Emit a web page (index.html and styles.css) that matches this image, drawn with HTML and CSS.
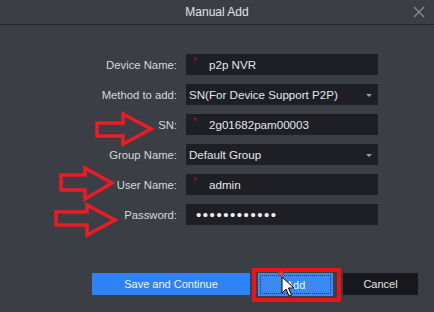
FILE: index.html
```html
<!DOCTYPE html>
<html>
<head>
<meta charset="utf-8">
<link rel="stylesheet" href="styles.css">
</head>
<body>
<div class="dialog">
  <div class="titlebar">
    <span class="title">Manual Add</span>
    <svg class="close" width="12" height="12" viewBox="0 0 12 12"><path d="M1 1L11 11M11 1L1 11" stroke="#8a8d94" stroke-width="1.3"/></svg>
  </div>
  <div class="form">
    <label class="lbl">Device Name:</label>
    <div class="field"><span class="req">*</span><span class="val">p2p NVR</span></div>
    <label class="lbl">Method to add:</label>
    <div class="field select"><span class="val plain">SN(For Device Support P2P)</span><span class="caret"></span></div>
    <label class="lbl">SN:</label>
    <div class="field"><span class="req">*</span><span class="val">2g01682pam00003</span></div>
    <label class="lbl">Group Name:</label>
    <div class="field select"><span class="val plain">Default Group</span><span class="caret"></span></div>
    <label class="lbl">User Name:</label>
    <div class="field"><span class="req">*</span><span class="val">admin</span></div>
    <label class="lbl">Password:</label>
    <div class="field"><span class="dots">••••••••••••</span></div>
  </div>
  <div class="buttons">
    <button class="btn primary wide">Save and Continue</button>
    <div class="addwrap">
      <button class="btn primary add">Add</button>
      <span class="redbox"></span>
    </div>
    <button class="btn dark">Cancel</button>
  </div>
  <svg class="arrows" width="434" height="312" viewBox="0 0 434 312">
    <g fill="none" stroke="#ec1c24" stroke-width="3.5" stroke-linejoin="miter">
      <polygon points="97,123 123,123 123,114 151,129 123,144 123,136 97,136"/>
      <polygon points="61,175 85,175 85,168 112,183 85,199 85,190 61,190"/>
      <polygon points="56,212 87,212 87,205 115,220 87,235 87,225 56,225"/>
    </g>
    <circle cx="281" cy="274" r="2.2" fill="none" stroke="#e0303a" stroke-width="1.3"/>
    <path d="M282 277 L282 293 L286 289 L289 296 L291.5 295 L288.5 288 L294 288 Z" fill="#fff" stroke="#000" stroke-width="1"/>
  </svg>
</div>
</body>
</html>
```
FILE: styles.css
```css
html, body {
  margin: 0;
  padding: 0;
  background: #3b3e45;
}
.dialog {
  position: relative;
  width: 434px;
  height: 312px;
  background: #3b3e45;
  font-family: "Liberation Sans", Arial, sans-serif;
  font-size: 11.3px;
  color: #d4d4d6;
  overflow: hidden;
}
.titlebar {
  height: 24px;
  border-bottom: 1px solid #23252a;
  display: flex;
  align-items: center;
  justify-content: center;
  position: relative;
}
.title {
  font-size: 12px;
  color: #e2e3e5;
}
.close {
  position: absolute;
  right: 9px;
  top: 6px;
}
.form {
  display: grid;
  grid-template-columns: 177px 192px;
  column-gap: 9px;
  row-gap: 9px;
  padding-top: 29px;
  grid-auto-rows: 21px;
}
.lbl {
  text-align: right;
  align-self: center;
  color: #d6d7da;
}
.field {
  background: #1d1f25;
  display: flex;
  align-items: center;
  position: relative;
  color: #e6e7e9;
  font-size: 11.6px;
}
.req {
  color: #b0102a;
  font-size: 10px;
  width: 23px;
  padding-left: 7px;
  box-sizing: border-box;
  align-self: flex-start;
  margin-top: 2px;
}
.val.plain {
  padding-left: 3px;
}
.caret {
  position: absolute;
  right: 6px;
  top: 10px;
  width: 0;
  height: 0;
  border-left: 3px solid transparent;
  border-right: 3px solid transparent;
  border-top: 3px solid #9a9ca2;
}
.dots {
  padding-left: 10px;
  font-size: 15px;
  letter-spacing: 1.55px;
  color: #f2f2f2;
}
.buttons {
  display: flex;
  padding-left: 92px;
  margin-top: 48px;
  align-items: flex-start;
}
.btn {
  height: 22px;
  border: none;
  font-family: "Liberation Sans", Arial, sans-serif;
  font-size: 11px;
  color: #eef3fb;
  padding: 0;
  margin: 0;
}
.primary {
  background: #2e82f5;
}
.wide {
  width: 158px;
}
.addwrap {
  position: relative;
  margin-left: 8px;
}
.add {
  width: 75px;
  height: 23px;
  background: #3a8af2;
  outline: 1px dotted #1a3866;
  outline-offset: -3px;
  display: block;
}
.redbox {
  position: absolute;
  left: -6px;
  top: -5px;
  width: 81px;
  height: 26px;
  border: 4px solid #e8141b;
}
.dark {
  background: #16181c;
  width: 75px;
  margin-left: 10px;
  color: #e4e5e7;
}
.arrows {
  position: absolute;
  left: 0;
  top: 0;
  pointer-events: none;
}
```
